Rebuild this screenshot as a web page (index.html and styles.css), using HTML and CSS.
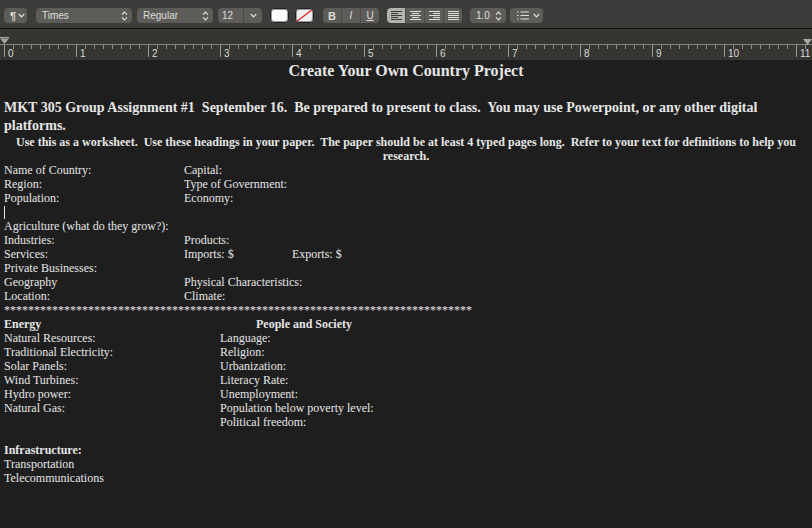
FILE: index.html
```html
<!DOCTYPE html>
<html lang="en">
<head>
    <meta charset="UTF-8">
    <title>Create Your Own Country Project</title>
    <link rel="stylesheet" href="styles.css">
</head>
<body>

    <div class="toolbar">
        <div class="ctl para">
            <span class="pilcrow">¶</span>
            <svg class="chev" width="7" height="5" viewBox="0 0 7 5"><path d="M0.8 1 L3.5 3.8 L6.2 1" /></svg>
        </div>
        <div class="ctl popup font-pop">
            <span>Times</span>
            <svg class="updown" width="7" height="10" viewBox="0 0 7 10"><path d="M1 3.6 L3.5 1.1 L6 3.6 M1 6.4 L3.5 8.9 L6 6.4" /></svg>
        </div>
        <div class="ctl popup style-pop">
            <span>Regular</span>
            <svg class="updown" width="7" height="10" viewBox="0 0 7 10"><path d="M1 3.6 L3.5 1.1 L6 3.6 M1 6.4 L3.5 8.9 L6 6.4" /></svg>
        </div>
        <div class="ctl size-box">
            <span class="size-val">12</span>
            <span class="size-btn">
                <svg class="chev" width="7" height="5" viewBox="0 0 7 5"><path d="M0.8 1 L3.5 3.8 L6.2 1" /></svg>
            </span>
        </div>
        <div class="well"></div>
        <div class="well well-none">
            <svg width="17" height="13" viewBox="0 0 17 13"><line x1="0" y1="13" x2="17" y2="0" /></svg>
        </div>
        <div class="ctl seg biu">
            <span class="b">B</span>
            <span class="i">I</span>
            <span class="u">U</span>
        </div>
        <div class="ctl seg align">
            <span class="on">
                <svg width="11" height="10" viewBox="0 0 11 10"><path d="M0 0.5 H11 M0 2.5 H7 M0 4.5 H11 M0 6.5 H7 M0 8.5 H11" /></svg>
            </span>
            <span>
                <svg width="11" height="10" viewBox="0 0 11 10"><path d="M0 0.5 H11 M2 2.5 H9 M0 4.5 H11 M2 6.5 H9 M0 8.5 H11" /></svg>
            </span>
            <span>
                <svg width="11" height="10" viewBox="0 0 11 10"><path d="M0 0.5 H11 M4 2.5 H11 M0 4.5 H11 M4 6.5 H11 M0 8.5 H11" /></svg>
            </span>
            <span>
                <svg width="11" height="10" viewBox="0 0 11 10"><path d="M0 0.5 H11 M0 2.5 H11 M0 4.5 H11 M0 6.5 H11 M0 8.5 H11" /></svg>
            </span>
        </div>
        <div class="ctl popup spacing">
            <span>1.0</span>
            <svg class="updown" width="7" height="10" viewBox="0 0 7 10"><path d="M1 3.6 L3.5 1.1 L6 3.6 M1 6.4 L3.5 8.9 L6 6.4" /></svg>
        </div>
        <div class="ctl list">
            <svg class="list-ico" width="12" height="9" viewBox="0 0 12 9"><path d="M0 1 H1.6 M0 4.5 H1.6 M0 8 H1.6 M3.5 1 H12 M3.5 4.5 H12 M3.5 8 H12" /></svg>
            <svg class="chev" width="7" height="5" viewBox="0 0 7 5"><path d="M0.8 1 L3.5 3.8 L6.2 1" /></svg>
        </div>
    </div>

    <div class="ruler">
        <svg class="marker marker-left" width="9" height="7" viewBox="0 0 9 7"><path d="M0 0 H9 V1.5 H0 Z M0.5 2 H8.5 L4.5 7 Z" /></svg>
        <svg class="marker marker-right" width="9" height="6" viewBox="0 0 9 6"><path d="M0 0 H9 L4.5 6 Z" /></svg>
        <div class="scale">
            <div class="inch">0</div>
            <div class="inch">1</div>
            <div class="inch">2</div>
            <div class="inch">3</div>
            <div class="inch">4</div>
            <div class="inch">5</div>
            <div class="inch">6</div>
            <div class="inch">7</div>
            <div class="inch">8</div>
            <div class="inch">9</div>
            <div class="inch">10</div>
            <div class="inch">11</div>
        </div>
    </div>

    <div class="doc">
        <h1 class="title">Create Your Own Country Project</h1>
        <div class="blank-big"></div>
        <p class="intro">MKT 305 Group Assignment #1  September 16.  Be prepared to present to class.  You may use Powerpoint, or any other digital platforms.</p>
        <p class="note">Use this as a worksheet.  Use these headings in your paper.  The paper should be at least 4 typed pages long.  Refer to your text for definitions to help you research.</p>

        <div class="row"><span>Name of Country:</span><span>Capital:</span></div>
        <div class="row"><span>Region:</span><span>Type of Government:</span></div>
        <div class="row"><span>Population:</span><span>Economy:</span></div>
        <div class="row"><span class="caret"></span></div>
        <div class="row"><span>Agriculture (what do they grow?):</span></div>
        <div class="row"><span>Industries:</span><span>Products:</span></div>
        <div class="row"><span>Services:</span><span>Imports: $</span><span>Exports: $</span></div>
        <div class="row"><span>Private Businesses:</span></div>
        <div class="row"><span>Geography</span><span>Physical Characteristics:</span></div>
        <div class="row"><span>Location:</span><span>Climate:</span></div>
        <div class="stars">******************************************************************************</div>

        <div class="row2"><span class="bold">Energy</span><span class="bold people">People and Society</span></div>
        <div class="row2"><span>Natural Resources:</span><span>Language:</span></div>
        <div class="row2"><span>Traditional Electricity:</span><span>Religion:</span></div>
        <div class="row2"><span>Solar Panels:</span><span>Urbanization:</span></div>
        <div class="row2"><span>Wind Turbines:</span><span>Literacy Rate:</span></div>
        <div class="row2"><span>Hydro power:</span><span>Unemployment:</span></div>
        <div class="row2"><span>Natural Gas:</span><span>Population below poverty level:</span></div>
        <div class="row2"><span></span><span>Political freedom:</span></div>
        <div class="row2"><span></span></div>
        <div class="row2"><span class="bold">Infrastructure:</span></div>
        <div class="row2"><span>Transportation</span></div>
        <div class="row2"><span>Telecommunications</span></div>
    </div>

</body>
</html>
```

FILE: styles.css
```css
body {
    margin: 0;
    width: 812px;
    height: 528px;
    overflow: hidden;
    background: #1e1e1e;
    font-family: "Liberation Serif", "Times New Roman", serif;
    color: #e6e6e6;
}

/* toolbar */
.toolbar {
    height: 20px;
    padding: 8px 0 0 4px;
    background: #3d3c3a;
    border-bottom: 1px solid #141414;
    display: flex;
    align-items: flex-start;
}
.ctl {
    height: 15px;
    background: #5d5c59;
    border-radius: 4px;
    color: #dedede;
    font-family: "Liberation Sans", Arial, sans-serif;
    font-size: 10px;
    display: flex;
    align-items: center;
    box-sizing: border-box;
    flex: none;
}
.ctl svg path, .ctl svg line {
    fill: none;
    stroke: #dedede;
    stroke-width: 1.2;
}
.para {
    width: 23px;
    padding-left: 6px;
    gap: 2px;
}
.pilcrow {
    font-size: 11px;
    font-weight: bold;
}
.popup {
    justify-content: space-between;
    padding: 0 4px 0 6px;
}
.font-pop {
    width: 96px;
    margin-left: 9px;
}
.style-pop {
    width: 76px;
    margin-left: 5px;
}
.size-box {
    width: 44px;
    margin-left: 5px;
}
.size-val {
    width: 25px;
    padding-left: 4px;
    box-sizing: border-box;
}
.size-btn {
    flex: 1;
    height: 15px;
    border-left: 1px solid #494845;
    display: flex;
    align-items: center;
    justify-content: center;
}
.well {
    width: 19px;
    height: 15px;
    margin-left: 8px;
    box-sizing: border-box;
    border: 1px solid #222;
    border-radius: 4px;
    background: #fbfbfb;
    box-shadow: inset 0 0 0 1px #9a9a9a;
    flex: none;
}
.well-none {
    margin-left: 6px;
    background: #eeeeee;
    overflow: hidden;
}
.well-none svg {
    display: block;
}
.well-none line {
    stroke: #e02020;
    stroke-width: 1.3;
}
.seg span {
    flex: 1;
    height: 15px;
    display: flex;
    align-items: center;
    justify-content: center;
    border-left: 1px solid #4d4c49;
}
.seg span:first-child {
    border-left: none;
}
.biu {
    width: 56px;
    margin-left: 9px;
    font-size: 11px;
}
.biu .b {
    font-weight: bold;
}
.biu .i {
    font-style: italic;
    font-family: "DejaVu Sans", sans-serif;
    font-size: 10px;
}
.biu .u {
    text-decoration: underline;
    font-size: 10px;
}
.align {
    width: 75px;
    margin-left: 8px;
    overflow: hidden;
}
.align span.on {
    background: #b3b2af;
    border-radius: 4px 0 0 4px;
}
.align span.on svg path {
    stroke: #3a3a3a;
}
.align svg path {
    stroke-width: 1;
}
.spacing {
    width: 36px;
    margin-left: 8px;
}
.list {
    width: 33px;
    margin-left: 4px;
    padding-left: 7px;
    gap: 4px;
}
.list-ico path {
    stroke-width: 1.3;
}

/* ruler */
.ruler {
    height: 31px;
    background: #363532;
    position: relative;
    overflow: hidden;
}
.marker {
    position: absolute;
    fill: #a9a8a5;
}
.marker-left {
    left: 0;
    top: 8px;
}
.marker-right {
    left: 803px;
    top: 10px;
}
.scale {
    margin-top: 15px;
    border-top: 1px solid #858481;
    padding-left: 4px;
    display: flex;
}
.inch {
    width: 72px;
    height: 12px;
    flex: none;
    box-sizing: border-box;
    border-left: 1px solid #9a9996;
    padding: 3px 0 0 3px;
    font-family: "Liberation Sans", Arial, sans-serif;
    font-size: 10px;
    line-height: 11px;
    color: #dadada;
    background: linear-gradient(to right, transparent 8px, #8e8d8a 8px, #8e8d8a 9px) 0 0 / 9px 4px repeat-x;
}

/* document */
.doc {
    width: 804px;
    padding: 1px 4px 0;
    font-size: 12px;
    line-height: 14px;
}
.title {
    margin: 0;
    font-size: 16px;
    line-height: 20px;
    text-align: center;
}
.blank-big {
    height: 18px;
}
.intro {
    margin: 0;
    font-size: 14px;
    line-height: 18px;
    font-weight: bold;
    white-space: pre-wrap;
}
.note {
    margin: 0;
    font-weight: bold;
    text-align: center;
    white-space: pre-wrap;
}
.row {
    height: 14px;
    display: grid;
    grid-template-columns: 180px 108px auto;
    white-space: nowrap;
}
.caret {
    width: 1px;
    height: 13px;
    background: #e6e6e6;
    margin-top: 1px;
}
.stars {
    height: 14px;
    white-space: nowrap;
}
.row2 {
    height: 14px;
    display: grid;
    grid-template-columns: 216px auto;
    white-space: nowrap;
}
.bold {
    font-weight: bold;
}
.people {
    padding-left: 36px;
}
```
